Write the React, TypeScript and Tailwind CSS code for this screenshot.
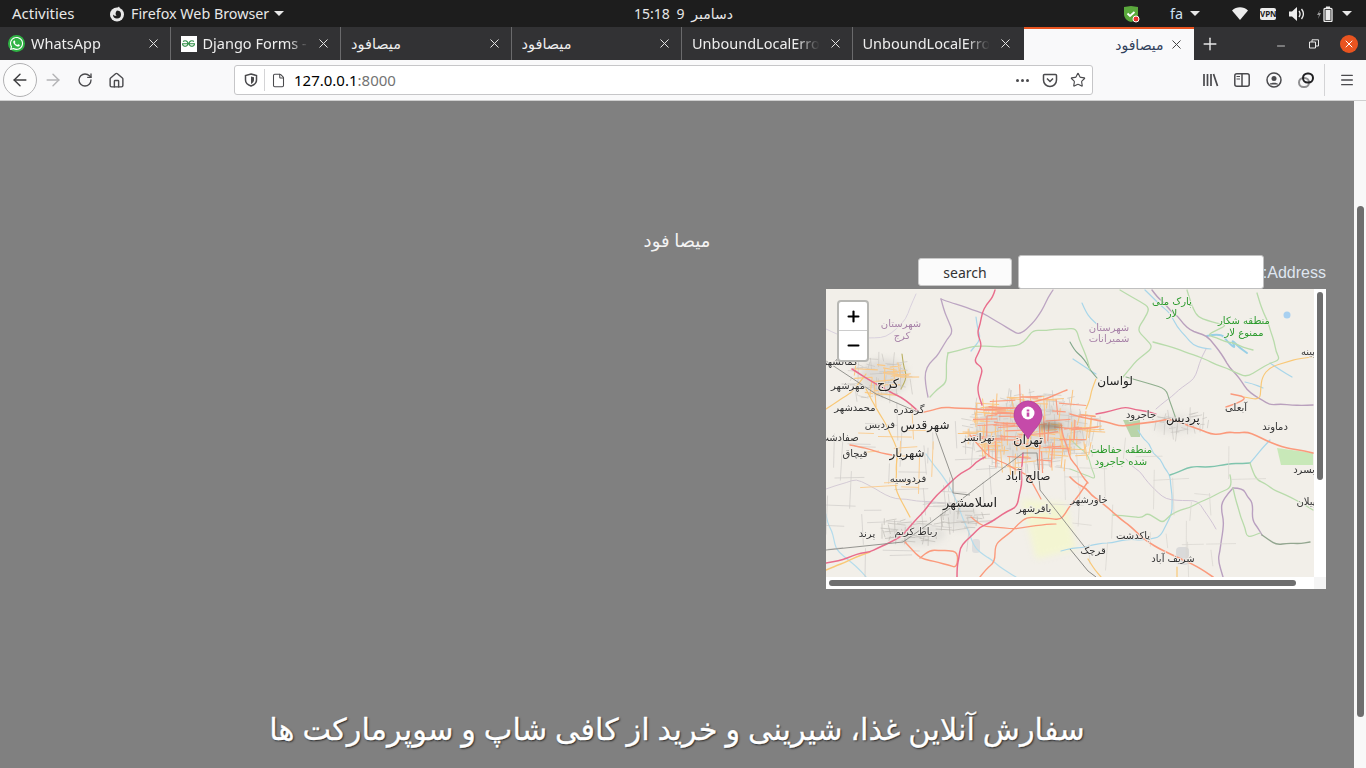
import React from "react";
import { ArrowLeft, ArrowRight, RotateCw, House, File, Star, Menu, X, Plus, Minus } from "lucide-react";
import { FaWhatsapp } from "react-icons/fa";
import { SiGeeksforgeeks } from "react-icons/si";

const Caret = () => (
  <svg width="10" height="5" viewBox="0 0 10 5">
    <path d="M0 0h10L5 5z" fill="#e8e8e8" />
  </svg>
);

const Tab = ({ title, icon, rtl }: any) => {
  return (
    <div className="w-[170.5px] h-full flex items-center border-r border-[#6a6a6c] pl-[10px] pr-[9px] shrink-0">
      {icon}
      <span
        className={`flex-1 overflow-hidden whitespace-nowrap text-[14.5px] text-[#eeeeee] ${
          rtl ? "" : "[mask-image:linear-gradient(to_right,black_78%,transparent_96%)]"
        }`}
      >
        {title}
      </span>
      <X size={15} strokeWidth={1.6} className="text-[#e4e4e4] ml-[3px] shrink-0" />
    </div>
  );
};

const seeded = (seed: number) => {
  let s = seed;
  return () => {
    s = (s * 16807) % 2147483647;
    return s / 2147483647;
  };
};

// street texture around a town
const cityLines = (
  cx: number,
  cy: number,
  rx: number,
  ry: number,
  count: number,
  seed: number,
  minLen = 4,
  maxLen = 18
) => {
  const rnd = seeded(seed);
  const out: string[] = [];
  for (let i = 0; i < count; i++) {
    const a = rnd() * Math.PI * 2;
    const r = Math.sqrt(rnd());
    const x = cx + Math.cos(a) * r * rx;
    const y = cy + Math.sin(a) * r * ry;
    const horizontal = rnd() > 0.5;
    const len = minLen + rnd() * (maxLen - minLen);
    const tilt = (rnd() - 0.5) * 5;
    out.push(
      horizontal
        ? `M${(x - len / 2).toFixed(1)} ${y.toFixed(1)}l${len.toFixed(1)} ${tilt.toFixed(1)}`
        : `M${x.toFixed(1)} ${(y - len / 2).toFixed(1)}l${tilt.toFixed(1)} ${len.toFixed(1)}`
    );
  }
  return out.join("");
};

// roughens a polyline a little and rounds its corners
const wiggle = (points: string) => {
  const pts = points.split(" ").map((p) => p.split(",").map(Number));
  const rnd = seeded(Math.round(pts[0][0] * 31 + pts[0][1] * 17 + pts.length * 7) + 5);
  const fine: number[][] = [];
  pts.forEach((p, i) => {
    fine.push(p);
    const next = pts[i + 1];
    if (!next) return;
    const steps = Math.floor(Math.hypot(next[0] - p[0], next[1] - p[1]) / 9);
    for (let k = 1; k < steps; k++) {
      const t = k / steps;
      fine.push([
        p[0] + (next[0] - p[0]) * t + (rnd() - 0.5) * 2.4,
        p[1] + (next[1] - p[1]) * t + (rnd() - 0.5) * 2.4,
      ]);
    }
  });
  let d = `M${fine[0][0]} ${fine[0][1]}`;
  for (let i = 1; i < fine.length - 1; i++) {
    const mx = (fine[i][0] + fine[i + 1][0]) / 2;
    const my = (fine[i][1] + fine[i + 1][1]) / 2;
    d += `Q${fine[i][0].toFixed(1)} ${fine[i][1].toFixed(1)} ${mx.toFixed(1)} ${my.toFixed(1)}`;
  }
  const last = fine[fine.length - 1];
  return d + `L${last[0]} ${last[1]}`;
};

const Road = ({ d, c, w = 1.2 }: any) => (
  <path d={wiggle(d)} fill="none" stroke={c} strokeWidth={w} strokeLinejoin="round" strokeLinecap="round" />
);

const labels: [string, number, number, number, string][] = [
  ["شهرستان", 75, 38, 10, "#a883a8"],
  ["کرج", 76, 50, 10, "#a883a8"],
  ["کرج", 62, 99, 13, "#222"],
  ["مهرشهر", 22, 100, 10, "#333"],
  ["کمالشهر", 14, 76, 10, "#333"],
  ["محمدشهر", 29, 122, 10, "#333"],
  ["گرمدره", 83, 124, 10, "#333"],
  ["شهرقدس", 99, 140, 12, "#222"],
  ["فردیس", 54, 139, 10, "#333"],
  ["صفادشت", 13, 152, 10, "#333"],
  ["قیچاق", 29, 168, 10, "#333"],
  ["شهریار", 81, 168, 12, "#222"],
  ["فردوسیه", 82, 193, 10, "#333"],
  ["اسلامشهر", 144, 218, 13, "#222"],
  ["رباط کریم", 90, 246, 10, "#333"],
  ["پرند", 41, 248, 10, "#333"],
  ["تهرانسر", 152, 152, 10, "#333"],
  ["تهران", 202, 155, 13, "#222"],
  ["صالح آباد", 202, 191, 12, "#222"],
  ["باقرشهر", 208, 223, 10, "#333"],
  ["لواسان", 289, 96, 12, "#222"],
  ["جاجرود", 315, 129, 10, "#333"],
  ["پردیس", 357, 133, 12, "#222"],
  ["آبعلی", 410, 122, 10, "#333"],
  ["دماوند", 449, 141, 10, "#333"],
  ["شهرستان", 283, 42, 10, "#a883a8"],
  ["شمیرانات", 283, 53, 10, "#a883a8"],
  ["پارک ملی", 346, 16, 10, "#2b9a2b"],
  ["لار", 346, 28, 10, "#2b9a2b"],
  ["منطقه شکار", 418, 35, 10, "#2b9a2b"],
  ["ممنوع لار", 418, 47, 10, "#2b9a2b"],
  ["منطقه حفاظت", 295, 164, 10, "#2b9a2b"],
  ["شده جاجرود", 295, 176, 10, "#2b9a2b"],
  ["خاورشهر", 263, 214, 10, "#333"],
  ["پاکدشت", 307, 250, 10, "#333"],
  ["قرچک", 267, 265, 10, "#333"],
  ["شریف آباد", 347, 273, 10, "#333"],
  ["بسرد", 478, 184, 10, "#333"],
  ["پیلان", 480, 216, 10, "#333"],
  ["پینه", 482, 66, 10, "#333"],
];

const MapDrawing = () => {
  return (
    <svg width="488" height="288" viewBox="0 0 488 288" className="block blur-[0.35px] [font-family:'DejaVu_Sans',sans-serif]">
      <rect width="488" height="288" fill="#f2efe9" />
      {/* towns */}
      <g className="blur-[3px]">
        <ellipse cx="205" cy="142" rx="56" ry="30" fill="#e0ddd8" />
        <ellipse cx="58" cy="88" rx="24" ry="18" fill="#dedbd6" />
        <ellipse cx="90" cy="245" rx="30" ry="11" fill="#e4e2dd" />
        <ellipse cx="135" cy="228" rx="18" ry="13" fill="#e4e2dd" />
        <ellipse cx="350" cy="135" rx="22" ry="9" fill="#e4e2dd" />
        <polygon points="195,210 240,215 250,260 210,270" fill="#f3f5d2" />
      </g>
      <polygon points="451,159 487,164 487,176 470,176 455,176" fill="#c8e8b8" />
      <polygon points="297,131 314,131 314,148 305,148" fill="#b9d4a9" />
      <rect x="350" y="258" width="13" height="18" fill="#dadada" rx="4" />
      <rect x="146" y="250" width="8" height="14" fill="#dedede" rx="3" />

      {/* rivers */}
      <Road d="319,1 344,24 351,38 367,56 385,60" c="#a8d6ea" />
      <Road d="256,14 265,30 272,36" c="#a8d6ea" />
      <Road d="247,70 270,85" c="#a8d6ea" />
      <Road d="381,47 395,44 410,60 405,50 421,64" c="#98cfe6" w={2} />
      <Road d="444,74 466,88" c="#a8d6ea" />
      <Road d="419,93 437,99" c="#a8d6ea" />
      <Road d="312,141 344,186 346,224 334,248 277,254 235,262" c="#a8d6ea" />
      <Road d="444,151 424,174" c="#a8d6ea" />
      <Road d="424,174 361,179 344,186" c="#7fc4ad" w={1.4} />
      <Road d="100,165 125,200 150,260 190,288" c="#b5dcec" />
      <Road d="0,225 10,260 40,288" c="#b5dcec" />
      <Road d="150,28 155,50 145,62" c="#a8d6ea" />
      <circle cx="461" cy="26" r="3.5" fill="#a8d0f0" />

      {/* boundaries */}
      <Road d="115,10 127,43 99,83 102,108" c="#bca5c2" w={1.3} />
      <Road d="115,10 157,24 194,46 207,34 227,1" c="#bca5c2" w={1.3} />
      <Road d="326,1 364,41 381,47 421,101 444,116 487,116" c="#b9a0bd" w={1.4} />
      <Road d="407,199 396,211 397,241 392,271 397,288" c="#b9a0c0" w={1.4} />
      <Road d="407,199 417,199 427,214 426,231 436,246" c="#b9a0c0" w={1.4} />
      <Road d="436,246 451,256 484,253" c="#93a690" w={1.4} />
      <Road d="0,40 25,50 60,48 80,30 90,5" c="#d6cddc" w={0.9} />
      <Road d="300,170 340,210 372,212 390,240" c="#cdbfd2" w={0.9} />
      <Road d="380,60 368,90 330,120" c="#cdbfd2" w={0.9} />
      <Road d="0,200 30,190 70,210 130,215" c="#d0c6d2" w={0.9} />
      <Road d="294,1 324,19 311,41 327,58 311,71 297,88" c="#b8dbab" w={1.3} />
      <Road d="244,53 271,89" c="#7fa68a" w={1.1} />
      <Road d="327,53 381,71 421,88 444,74 454,71 431,4" c="#b8dbab" w={1.3} />
      <Road d="361,1 372,28 401,36 381,46 427,61" c="#b8dbab" w={1.3} />
      <Road d="122,64 120,94 104,108" c="#b8dbab" w={1.3} />
      <Road d="122,64 144,58 194,56 207,41 250,39 264,81" c="#b8dbab" w={1.3} />
      <Road d="404,186 407,198 384,209 344,226 337,234 321,224 316,229 287,226" c="#b8dbab" w={1.3} />
      <Road d="424,174 431,191 464,208 487,221" c="#b8dbab" w={1.3} />
      <Road d="407,199 421,249 434,244" c="#b8dbab" w={1.3} />
      <Road d="76,65 81,88 75,100" c="#b8ae5e" w={1.1} />
      <Road d="300,88 325,95 340,100 350,130" c="#8fae8d" w={1.1} />
      <Road d="244,150 262,165 270,190 244,180" c="#b8dbab" w={1.1} />

      {/* street texture */}
      <path d={cityLines(70, 205, 100, 75, 55, 97, 12, 40)} stroke="#cfccc8" strokeWidth="0.7" fill="none" />
      <path d={cityLines(330, 215, 100, 70, 28, 101, 14, 40)} stroke="#d8d5d0" strokeWidth="0.7" fill="none" />
      <path d={cityLines(205, 142, 72, 40, 170, 11)} stroke="#c6c3bd" strokeWidth="0.6" fill="none" />
      <path d={cityLines(55, 92, 32, 24, 55, 23)} stroke="#c6c3bd" strokeWidth="0.6" fill="none" />
      <path d={cityLines(85, 240, 36, 14, 40, 37)} stroke="#c0bdb8" strokeWidth="0.7" fill="none" />
      <path d={cityLines(135, 228, 22, 14, 30, 41)} stroke="#c0bdb8" strokeWidth="0.7" fill="none" />
      <path d={cityLines(355, 135, 28, 12, 30, 53)} stroke="#c6c3bd" strokeWidth="0.6" fill="none" />
      <path d={cityLines(208, 142, 68, 40, 110, 67, 8, 24)} stroke="#fcc581" strokeWidth="1" fill="none" />
      <path d={cityLines(208, 140, 60, 34, 55, 79, 10, 30)} stroke="#fa9d80" strokeWidth="1.2" fill="none" />
      <path d={cityLines(55, 88, 28, 18, 22, 91, 8, 26)} stroke="#fbc885" strokeWidth="1.1" fill="none" />
      <path d={cityLines(70, 170, 40, 40, 14, 113, 14, 40)} stroke="#fbcb8c" strokeWidth="0.9" fill="none" />

      {/* yellow roads */}
      <Road d="72,164 69,198 84,228" c="#f9c877" w={1.2} />
      <Road d="40,100 60,135 72,164" c="#f9c877" w={1.2} />
      <Road d="487,68 461,73 444,78 436,88 434,111 418,108" c="#f9c877" w={1.2} />
      <Road d="351,278 351,288" c="#f9c877" w={1.2} />
      <Road d="0,120 25,104 40,85" c="#f9c877" w={1.2} />
      <Road d="270,90 260,120" c="#f9c877" w={1.2} />

      {/* main roads */}
      <Road d="94,124 117,118 161,121 194,119 241,101" c="#fb9a7c" w={1.5} />
      <Road d="244,125 294,137 342,130 385,145 421,143 451,156 487,164" c="#fb9a7c" w={1.6} />
      <Road d="400,118 415,113 420,108 405,105" c="#fb9a7c" w={1.4} />
      <Road d="79,253 94,269 131,279 132,263 104,261 94,269" c="#fb9a7c" w={1.4} />
      <Road d="154,288 169,273 169,256 201,228 234,231 261,194" c="#fb9a7c" w={1.4} />
      <Road d="24,156 66,166" c="#fb9a7c" w={1.4} />
      <Road d="244,188 324,254 387,288" c="#fb9a7c" w={1.6} />
      <Road d="144,146 160,165 200,185 215,210" c="#fb9a7c" w={1.3} />
      <Road d="0,281 30,268 44,263" c="#f9c877" w={1.5} />
      <Road d="235,135 244,170 262,194" c="#fb9a7c" w={1.4} />
      <Road d="145,228 155,237 190,240 230,235" c="#fb9a7c" w={1.2} />

      {/* motorway */}
      <Road d="169,1 167,8 156,24 151,44 156,56 148,73 157,79 151,101 156,116" c="#e96d8c" w={1.4} />
      <Road d="0,274 44,263 77,246 104,214 127,191 159,168" c="#e96d8c" w={1.5} />
      <Road d="131,288 134,259 154,238 191,218 196,194 197,164" c="#e96d8c" w={1.5} />
      <Road d="26,80 50,95 75,108 94,124" c="#e96d8c" w={1.5} />
      <Road d="270,125 300,118 330,125" c="#e96d8c" w={1.3} />

      {/* rail */}
      <polyline points="197,164 211,164 214,201 261,261" fill="none" stroke="#8a8a86" strokeWidth="0.9" />
      <polyline points="197,164 104,234 77,253 0,261" fill="none" stroke="#8a8a86" strokeWidth="0.9" />
      <polyline points="109,141 127,191 127,204 144,206" fill="none" stroke="#8a8a86" strokeWidth="0.9" />
      <polyline points="0,72 50,105 94,124" fill="none" stroke="#8a8a86" strokeWidth="0.9" />
      <polyline points="244,260 262,282 270,288" fill="none" stroke="#7d7d7a" strokeWidth="0.9" />
      <Road d="262,270 275,288" c="#f9c877" w={1.2} />

      {labels.map(([t, x, y, size, color], i) => (
        <text
          key={i}
          x={x}
          y={y}
          fontSize={size}
          fill={color}
          textAnchor="middle"
          stroke="#f2efe9"
          strokeWidth="2"
          strokeOpacity="0.75"
          className="[paint-order:stroke]"
        >
          {t}
        </text>
      ))}

      {/* marker */}
      <ellipse cx="224" cy="137" rx="12" ry="4" fill="#6b5a3c" opacity="0.5" className="blur-[2px]" />
      <path d="M202 150C197 141 188 135 188 126a14 14 0 0 1 28 0C216 135 207 141 202 150z" fill="#c54aa9" stroke="#b23f98" strokeWidth="0.8" />
      <circle cx="202" cy="124" r="6.5" fill="#ffffff" />
      <rect x="200.7" y="120.5" width="2.6" height="2" fill="#c54aa9" />
      <rect x="200.7" y="123.5" width="2.6" height="4.2" fill="#c54aa9" />
    </svg>
  );
};

const App = () => {
  return (
    <div className="w-[1366px] h-[768px] overflow-hidden flex flex-col bg-[#808080] [font-family:'Noto_Sans','DejaVu_Sans',sans-serif]">
      {/* gnome panel */}
      <div className="h-[27px] bg-[#1d1d1d] flex items-center text-[14.3px] text-[#e8e8e8] shrink-0">
        <span className="ml-[12px] w-[97px] text-[15px]">Activities</span>
        <svg width="16" height="16" viewBox="0 0 16 16">
          <circle cx="8" cy="8.5" r="7" fill="#e8e8e8" />
          <path d="M8 4.5a4 4 0 1 1-4 4c1 1 2 1.6 3.5 1.2C6 8.5 6.4 6 8 4.5z" fill="#1d1d1d" />
          <path d="M10 0.5c1 1.500 1 3-.5 4l-3-1z" fill="#e8e8e8" />
        </svg>
        <span className="ml-[6px] w-[143px] whitespace-nowrap">Firefox Web Browser</span>
        <Caret />
        <div className="ml-[350px] flex items-center w-[99px] justify-between whitespace-nowrap text-[14px]">
          <span>15:18</span>
          <span>9</span>
          <span dir="rtl">دسامبر</span>
        </div>
        <svg width="18" height="18" viewBox="0 0 18 18" className="ml-[389px]">
          <path d="M2 2l7-1 7 1v7c0 4-3 7-7 8-4-1-7-4-7-8z" fill="#5aa83c" />
          <path d="M5.500 8.500l2.500 2.500 4.500-4" stroke="#fff" strokeWidth="1.800" fill="none" />
          <circle cx="14" cy="14" r="3" fill="#e93030" stroke="#fff" />
        </svg>
        <span className="ml-[30px] text-[#cfe3f5]">fa</span>
        <span className="ml-[7px]">
          <Caret />
        </span>
        <svg width="16" height="13" viewBox="0 0 16 13" className="ml-[32px]">
          <path d="M0 3.500C4.500-.7 11.500-.7 16 3.500L8 13z" fill="#ececec" />
        </svg>
        <span className="ml-[12px] w-[16px] h-[12px] bg-[#ececec] rounded-[2px] text-[#1d1d1d] text-[8px] leading-[12px] font-bold text-center">
          VPN
        </span>
        <svg width="15" height="14" viewBox="0 0 15 14" className="ml-[13px]">
          <path d="M0 4.500h3L8 0v14L3 9.500H0z" fill="#ececec" />
          <path d="M10 4c1.300 1.800 1.300 4.200 0 6M12.500 2c2.300 3 2.300 7 0 10" stroke="#ececec" strokeWidth="1.300" fill="none" />
        </svg>
        <svg width="16" height="16" viewBox="0 0 16 16" className="ml-[13px]">
          <path d="M3 4L0 9h2l-1 4 3-6H2z" fill="#9a9a9a" />
          <rect x="7" y="2.500" width="8" height="13" rx="1" fill="none" stroke="#ececec" strokeWidth="1.300" />
          <rect x="9" y="0.500" width="4" height="2" fill="#ececec" />
          <rect x="8.500" y="4" width="5" height="10" fill="#ececec" />
        </svg>
        <span className="ml-[9px]">
          <Caret />
        </span>
      </div>

      {/* tab strip */}
      <div className="h-[33px] bg-[#323234] flex items-stretch shrink-0">
        <Tab
          title="WhatsApp"
          icon={
            <span className="w-[17px] h-[17px] mr-[6px] -ml-[2px] rounded-full bg-[#2fb344] flex items-center justify-center shrink-0">
              <FaWhatsapp size={15} className="text-white" />
            </span>
          }
        />
        <Tab
          title="Django Forms - GeeksforGeeks"
          icon={
            <span className="w-[16px] h-[16px] mr-[6px] bg-white flex items-center justify-center shrink-0">
              <SiGeeksforgeeks size={13} className="text-[#2f8d46]" />
            </span>
          }
        />
        <Tab title="میصافود" rtl />
        <Tab title="میصافود" rtl />
        <Tab title="UnboundLocalError at /" />
        <div className="w-[171px] h-full flex items-center pl-[10px] pr-[11px] shrink-0">
          <span className="flex-1 overflow-hidden whitespace-nowrap text-[14.5px] text-[#eeeeee] [mask-image:linear-gradient(to_right,black_78%,transparent_96%)]">
            UnboundLocalError at /
          </span>
          <X size={15} strokeWidth={1.6} className="text-[#e4e4e4] ml-[3px] shrink-0" />
        </div>
        <div className="w-[170px] h-full bg-[#f9f9fa] border-t-2 border-[#e95420] flex items-center justify-end pr-[10px] shrink-0">
          <span dir="rtl" className="text-[14px] text-[#30405a] mr-[2px]">
            میصافود
          </span>
          <X size={15} strokeWidth={1.6} className="text-[#444] ml-[3px]" />
        </div>
        <Plus size={20} strokeWidth={1.7} className="text-[#e8e8e8] self-center ml-[6px]" />
        <Minus size={12} strokeWidth={1.6} className="text-[#e8e8e8] self-center ml-[55px] mt-[5px]" />
        <svg width="10" height="10" viewBox="0 0 10 10" className="self-center ml-[22px]">
          <path d="M.5 3h6v6h-6zM3 3V.800h6.500V7H7" fill="none" stroke="#e8e8e8" />
        </svg>
        <span className="self-center ml-[21px] w-[18px] h-[18px] rounded-full bg-[#e95420] flex items-center justify-center">
          <X size={12} strokeWidth={2} className="text-white" />
        </span>
      </div>

      {/* toolbar */}
      <div className="h-[41px] bg-[#f9f9fa] border-b border-[#cfcfcf] flex items-center shrink-0">
        <span className="ml-[3px] w-[34px] h-[34px] rounded-full border border-[#b1b1b3] bg-[#fcfcfc] flex items-center justify-center">
          <ArrowLeft size={20} strokeWidth={1.7} className="text-[#3c3c3e]" />
        </span>
        <ArrowRight size={20} strokeWidth={1.7} className="ml-[6px] text-[#b4b4b6]" />
        <RotateCw size={16} strokeWidth={2} className="ml-[14px] text-[#4a4a4d]" />
        <House size={17} strokeWidth={2} className="ml-[15px] text-[#4a4a4d]" />
        <div className="ml-[109px] w-[859px] h-[30px] bg-white border border-[#c6c6c8] rounded-[3px] flex items-center">
          <svg width="14" height="14" viewBox="0 0 14 14" className="ml-[9px]">
            <path d="M7 1l5.500 1.500V7c0 3-2.500 5-5.500 6C4 12 1.500 10 1.500 7V2.500z" fill="none" stroke="#4a4a4d" strokeWidth="1.500" />
            <path d="M7 3.500l3 .8V7c0 1.800-1.400 3.200-3 3.900z" fill="#4a4a4d" />
          </svg>
          <span className="ml-[6px] w-px h-[22px] bg-[#d4d4d6]" />
          <File size={15} strokeWidth={1.7} className="ml-[6px] text-[#4a4a4d]" />
          <span className="ml-[8px] text-[15px] text-black">
            127.0.0.1<span className="text-[#737373]">:8000</span>
          </span>
          <span className="flex-1" />
          <span className="flex gap-[2px]">
            <span className="w-[3px] h-[3px] rounded-full bg-[#4a4a4d]" />
            <span className="w-[3px] h-[3px] rounded-full bg-[#4a4a4d]" />
            <span className="w-[3px] h-[3px] rounded-full bg-[#4a4a4d]" />
          </span>
          <svg width="16" height="15" viewBox="0 0 16 15" className="ml-[13px]">
            <path d="M2.500 1.500h11a1 1 0 0 1 1 1V7a6.500 6.500 0 0 1-13 0V2.500a1 1 0 0 1 1-1z" fill="none" stroke="#4a4a4d" strokeWidth="1.500" />
            <path d="M5 5.500l3 3 3-3" fill="none" stroke="#4a4a4d" strokeWidth="1.500" />
          </svg>
          <Star size={16} strokeWidth={1.7} className="ml-[12px] mr-[6px] text-[#4a4a4d]" />
        </div>
        <svg width="16" height="14" viewBox="0 0 16 14" className="ml-[110px]">
          <path d="M1 1v12M4.500 1v12M8 1v12" stroke="#4a4a4d" strokeWidth="1.700" />
          <path d="M10.500 1l4 12" stroke="#4a4a4d" strokeWidth="1.700" />
        </svg>
        <svg width="16" height="14" viewBox="0 0 16 14" className="ml-[15px]">
          <rect x="0.800" y="0.800" width="14.400" height="12.400" rx="2" fill="none" stroke="#4a4a4d" strokeWidth="1.500" />
          <path d="M8 1v12" stroke="#4a4a4d" strokeWidth="1.500" />
          <path d="M2.500 3.500H6M2.500 6H6" stroke="#4a4a4d" />
        </svg>
        <svg width="16" height="16" viewBox="0 0 16 16" className="ml-[16px]">
          <circle cx="8" cy="8" r="7" fill="none" stroke="#4a4a4d" strokeWidth="1.500" />
          <circle cx="8" cy="6.500" r="2.500" fill="#4a4a4d" />
          <path d="M3.500 12.500c1-2.500 8-2.500 9 0z" fill="#4a4a4d" />
        </svg>
        <svg width="16" height="16" viewBox="0 0 16 16" className="ml-[16px]">
          <rect x="1" y="6" width="10" height="9" rx="4.500" fill="none" stroke="#8f8f91" strokeWidth="2" />
          <rect x="5" y="1.500" width="10" height="9" rx="4.500" fill="none" stroke="#1f1f21" strokeWidth="2" />
        </svg>
        <span className="ml-[10px] w-px h-[32px] bg-[#d4d4d6]" />
        <Menu size={16} strokeWidth={2} className="ml-[14px] text-[#4a4a4d]" />
      </div>

      {/* page */}
      <div className="flex-1 flex min-h-0">
        <div className="flex-1 flex flex-col items-center">
          <p dir="rtl" className="mt-[126px] text-[18px] leading-[26px] text-[#f3f3f3]">
            میصا فود
          </p>
          <div dir="rtl" className="mt-[2px] self-stretch flex items-center pr-[28px] [font-family:'Liberation_Sans',sans-serif]">
            <label className="text-[16px] text-[#dfe6f0] w-[62px] mt-[2px]">Address:</label>
            <input className="w-[246px] h-[34px] bg-white border border-[#c0c0c0] rounded-[3px]" />
            <button className="mr-[6px] w-[94px] h-[28px] bg-[#fbfbfb] border border-[#c8c8c8] rounded-[3px] text-[14px] text-[#333] [font-family:'Noto_Sans',sans-serif]">
              search
            </button>
          </div>
          <div className="self-end mr-[28px] w-[500px] h-[300px] bg-white flex flex-col">
            <div className="flex h-[288px]">
              <div className="relative w-[488px] h-[288px] overflow-hidden">
                <MapDrawing />
                <div className="absolute left-[11px] top-[11px] w-[28px] border-2 border-[#b8b8b4] rounded-[4px] bg-white flex flex-col box-content">
                  <span className="h-[29px] flex items-center justify-center border-b border-[#cccccc]">
                    <Plus size={17} strokeWidth={3} className="text-black" />
                  </span>
                  <span className="h-[29px] flex items-center justify-center">
                    <Minus size={17} strokeWidth={3} className="text-black" />
                  </span>
                </div>
              </div>
              <div className="w-[12px] pt-[3px] flex justify-center">
                <span className="w-[6px] h-[188px] rounded-full bg-[#6e6e6e]" />
              </div>
            </div>
            <div className="flex h-[12px]">
              <div className="w-[488px] pl-[3px] pt-[3px]">
                <div className="w-[467px] h-[6px] rounded-full bg-[#6e6e6e]" />
              </div>
              <div className="w-[12px] bg-[#f5f5f5]" />
            </div>
          </div>
          <h1
            dir="rtl"
            className="mt-[118px] text-[30.4px] leading-[44px] font-medium text-white [-webkit-text-stroke:0.3px_white] [text-shadow:1px_1px_2px_#222] whitespace-nowrap"
          >
            سفارش آنلاین غذا، شیرینی و خرید از کافی شاپ و سوپرمارکت ها
          </h1>
        </div>
        <div className="w-[12px] bg-[#f8f8f8] pt-[105px] flex justify-center shrink-0">
          <span className="w-[7px] h-[511px] rounded-full bg-[#6e6e6e]" />
        </div>
      </div>
    </div>
  );
};

export default App;
